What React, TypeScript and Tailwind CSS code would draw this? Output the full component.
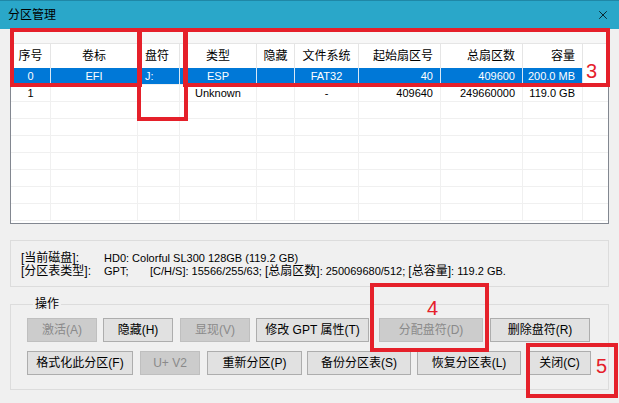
import { X } from 'lucide-react'

type Col = { w: string; align: 'center' | 'left' | 'right' }

const COLS: Col[] = [
  { w: 'w-[40px]', align: 'center' },
  { w: 'w-[87px]', align: 'center' },
  { w: 'w-[42px]', align: 'left' },
  { w: 'w-[77px]', align: 'center' },
  { w: 'w-[38px]', align: 'center' },
  { w: 'w-[64px]', align: 'center' },
  { w: 'w-[82px]', align: 'right' },
  { w: 'w-[82px]', align: 'right' },
  { w: 'w-[60px]', align: 'right' },
]

const HEAD = ['序号', '卷标', '盘符', '类型', '隐藏', '文件系统', '起始扇区号', '总扇区数', '容量']

const ROWS = [
  ['0', 'EFI', 'J:', 'ESP', '', 'FAT32', '40', '409600', '200.0 MB'],
  ['1', '', '', 'Unknown', '', '-', '409640', '249660000', '119.0 GB'],
]

const alignCls = {
  center: 'justify-center',
  left: 'justify-start pl-[7px]',
  right: 'justify-end pr-[7px]',
}

function Btn({ label, w, ml, off }: { label: string; w: string; ml: string; off?: boolean }) {
  return (
    <div
      className={`${w} ${ml} h-[24px] flex items-center justify-center border text-[12px] ${
        off
          ? 'bg-[#cccccc] border-[#bfbfbf] text-[#8a8a8a]'
          : 'bg-[#e1e1e1] border-[#adadad] text-black'
      }`}
    >
      {label}
    </div>
  )
}

export default function App() {
  return (
    <div className="relative w-[619px] h-[403px] overflow-hidden bg-[#f0f0f0] font-['Liberation_Sans','Noto_Sans_CJK_SC',sans-serif] text-black">
      {/* title bar */}
      <div className="h-[29px] bg-[#2aa7c9] border-t border-[#1f87a6] flex items-center justify-between pl-[8px] pr-[9px]">
        <span className="text-[12px]">分区管理</span>
        <X className="w-[14px] h-[14px]" strokeWidth={1.3} />
      </div>

      <div className="px-[10px] pt-[2px]">
        {/* partition list */}
        <div className="h-[193px] bg-white border border-[#828790] overflow-hidden">
          <div className="h-[11px] bg-[#f7f7f7]" />
          <div className="flex h-[25px] border-t border-[#e5e5e5] bg-white">
            {COLS.map((c, i) => (
              <div
                key={i}
                className={`${c.w} ${alignCls[c.align]} flex items-center text-[12px] border-r border-[#e5e5e5] shrink-0`}
              >
                {HEAD[i]}
              </div>
            ))}
            <div className="flex-1" />
          </div>
          {Array.from({ length: 9 }).map((_, r) => {
            const row = ROWS[r]
            const sel = r === 0
            return (
              <div key={r} className="flex h-[17px] border-b border-[#f0f0f0]">
                {COLS.map((c, i) => (
                  <div
                    key={i}
                    className={`${c.w} ${alignCls[c.align]} flex items-center text-[11px] border-r shrink-0 ${
                      sel ? 'bg-[#0078d7] text-white border-[#d9e8f5]' : 'border-[#f0f0f0]'
                    }`}
                  >
                    {row ? row[i] : ''}
                  </div>
                ))}
                <div className="flex-1" />
              </div>
            )
          })}
        </div>

        {/* disk info */}
        <div className="mt-[16px] h-[47px] border border-[#dcdcdc] flex flex-col justify-center pl-[10px] pt-[2px] text-[12px] leading-[13px]">
          <div className="flex">
            <span className="w-[83px]">[当前磁盘]:</span>
            <span className="text-[11px]">HD0: Colorful SL300 128GB (119.2 GB)</span>
          </div>
          <div className="flex">
            <span className="w-[83px]">[分区表类型]:</span>
            <span className="text-[11px] w-[46px]">GPT;</span>
            <span className="text-[11px]">
              [C/H/S]: 15566/255/63; <span className="text-[12px]">[总扇区数]</span>: 250069680/512;{' '}
              <span className="text-[12px]">[总容量]</span>: 119.2 GB.
            </span>
          </div>
        </div>

        {/* operations */}
        <fieldset className="mt-[10px] h-[93px] border border-[#dcdcdc] pl-[16px]">
          <legend className="ml-[6px] px-[2px] text-[12px] leading-[14px]">操作</legend>
          <div className="flex mt-[7px]">
            <Btn label="激活(A)" w="w-[70px]" ml="ml-0" off />
            <Btn label="隐藏(H)" w="w-[70px]" ml="ml-[6px]" />
            <Btn label="显现(V)" w="w-[70px]" ml="ml-[7px]" off />
            <Btn label="修改 GPT 属性(T)" w="w-[113px]" ml="ml-[6px]" />
            <Btn label="分配盘符(D)" w="w-[104px]" ml="ml-[10px]" off />
            <Btn label="删除盘符(R)" w="w-[100px]" ml="ml-[7px]" />
          </div>
          <div className="flex mt-[9px]">
            <Btn label="格式化此分区(F)" w="w-[106px]" ml="ml-0" />
            <Btn label="U+ V2" w="w-[60px]" ml="ml-[7px]" off />
            <Btn label="重新分区(P)" w="w-[95px]" ml="ml-[7px]" />
            <Btn label="备份分区表(S)" w="w-[104px]" ml="ml-[5px]" />
            <Btn label="恢复分区表(L)" w="w-[104px]" ml="ml-[6px]" />
            <Btn label="关闭(C)" w="w-[63px]" ml="ml-[7px]" />
          </div>
        </fieldset>
      </div>

      {/* red annotation overlays */}
      <div className="absolute left-[10px] top-[28px] w-[132px] h-[59px] border-[4px] border-[#e5202a]" />
      <div className="absolute left-[137px] top-[28px] w-[51px] h-[93px] border-[4px] border-[#e5202a]" />
      <div className="absolute left-[183px] top-[28px] w-[427px] h-[59px] border-[4px] border-[#e5202a]" />
      <div className="absolute left-[586px] top-[60px] text-[20px] leading-[22px] text-[#e5202a]">3</div>
      <div className="absolute left-[370px] top-[283px] w-[119px] h-[69px] border-[4px] border-[#e5202a]" />
      <div className="absolute left-[427px] top-[297px] text-[20px] leading-[22px] text-[#e5202a]">4</div>
      <div className="absolute left-[526px] top-[343px] w-[92px] h-[55px] border-[4px] border-[#e5202a]" />
      <div className="absolute left-[596px] top-[355px] text-[20px] leading-[22px] text-[#e5202a]">5</div>
    </div>
  )
}
